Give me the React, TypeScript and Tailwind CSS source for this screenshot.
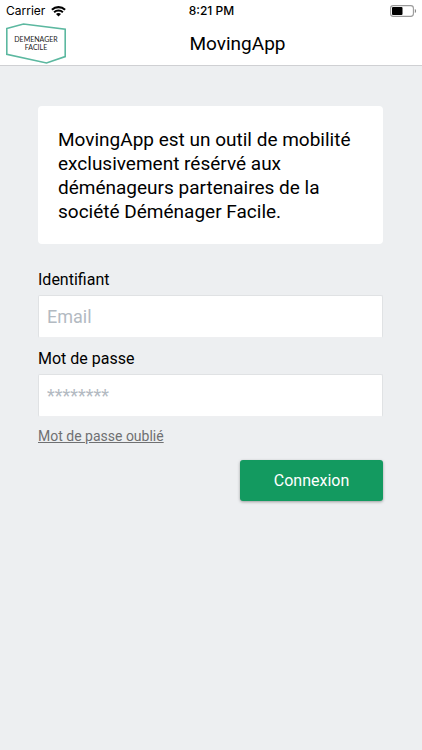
import React from "react";

function WifiIcon() {
  return (
    <svg className="h-[11px] w-[15px]" viewBox="0 0 15 11" fill="none" stroke="#000" aria-hidden="true">
      <path d="M0.9 3.7 C4.6 0.2 10.4 0.2 14.1 3.7" strokeWidth="2.1" />
      <path d="M3.1 6.2 C5.6 3.9 9.4 3.9 11.9 6.2" strokeWidth="2" />
      <path d="M7.5 10.4 L5 8 C6.4 6.8 8.6 6.8 10 8 Z" fill="#000" stroke="none" />
    </svg>
  );
}

function BatteryIcon() {
  return (
    <svg className="h-3 w-[27px]" viewBox="0 0 27 12" aria-hidden="true">
      <rect x="0.6" y="0.6" width="22.8" height="10.8" rx="2.6" fill="#fff" stroke="#9a9a9a" strokeWidth="1.1" />
      <rect x="2" y="2" width="10.5" height="8" rx="1" fill="#000" />
      <path d="M24.8 4 C26.5 4.5 26.5 7.5 24.8 8 Z" fill="#8c8c8c" />
    </svg>
  );
}

function Logo() {
  return (
    <svg className="h-[42px] w-[62px]" viewBox="0 0 62 42" role="img" aria-label="Demenager Facile">
      <path d="M1.8 5.6 L18.5 1 L60.2 6.2 V33.6 L41.5 40 L1.8 31.4 Z" fill="#fff" stroke="#5cb8a0" strokeWidth="1.6" />
      <text x="31" y="19" textAnchor="middle" fontSize="7" fill="#222" className="font-['Lato',sans-serif]">
        DEMENAGER
      </text>
      <text x="31" y="27" textAnchor="middle" fontSize="7" fill="#222" className="font-['Lato',sans-serif]">
        FACILE
      </text>
    </svg>
  );
}

type FieldProps = { id: string; label: string; type: string; placeholder: string };

function Field({ id, label, type, placeholder }: FieldProps) {
  return (
    <div className="flex flex-col gap-[3px]">
      <label htmlFor={id} className="text-base leading-6 text-black">
        {label}
      </label>
      <input
        id={id}
        type={type}
        placeholder={placeholder}
        className="h-[43px] w-full rounded-[2px] border border-[#e0e2e4] border-b-[#eeeff1] bg-white px-2 text-[18px] text-black outline-none placeholder:text-[#b3bac2]"
      />
    </div>
  );
}

export default function App() {
  return (
    <div className="flex min-h-screen flex-col bg-[#edeff1] font-['Roboto',sans-serif] text-black">
      <header className="border-b border-[#cfd0d3] bg-white">
        <div className="grid h-[22px] grid-cols-3 items-center pr-[5px] pl-[6px] font-['Inter',sans-serif] text-xs">
          <div className="flex items-center gap-[6px]">
            <span>Carrier</span>
            <WifiIcon />
          </div>
          <span className="text-center font-medium">8:21 PM</span>
          <div className="flex justify-end">
            <BatteryIcon />
          </div>
        </div>
        <div className="grid h-[43px] grid-cols-[1fr_auto_1fr] items-center pl-[5px]">
          <Logo />
          <h1 className="pl-12 text-[19px] leading-6">MovingApp</h1>
        </div>
      </header>
      <main className="flex flex-col pt-10 pr-[39px] pl-[38px]">
        <p className="rounded-[4px] bg-white px-5 pt-[22px] pb-5 text-[19px] leading-6">
          MovingApp est un outil de mobilité exclusivement résérvé aux déménageurs partenaires de la société Déménager Facile.
        </p>
        <form className="flex flex-col pt-6" onSubmit={(e) => e.preventDefault()}>
          <div className="flex flex-col gap-[9px]">
            <Field id="email" label="Identifiant" type="email" placeholder="Email" />
            <Field id="password" label="Mot de passe" type="password" placeholder="********" />
          </div>
          <a href="#" className="mt-[7px] self-start text-sm leading-6 text-[#6f7072] underline">
            Mot de passe oublié
          </a>
          <button
            type="submit"
            className="mt-3 h-[41px] w-[143px] self-end rounded-[3px] bg-[#139a60] text-base text-white shadow-[0_1px_3px_rgba(0,0,0,0.35)]"
          >
            Connexion
          </button>
        </form>
      </main>
    </div>
  );
}
